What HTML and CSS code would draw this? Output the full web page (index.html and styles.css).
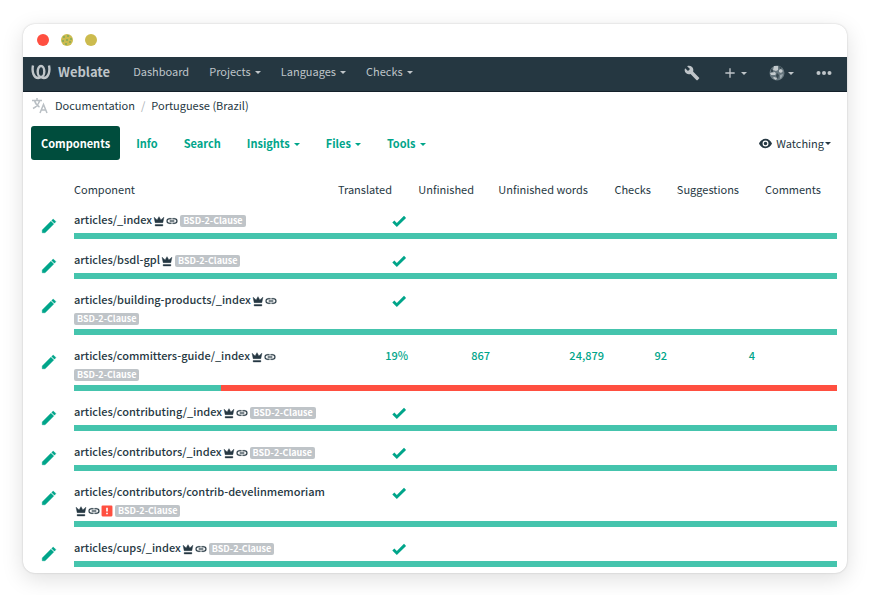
FILE: index.html
```html
<!DOCTYPE html>
<html lang="en">
<head>
<meta charset="utf-8">
<title>Weblate</title>
<link rel="stylesheet" href="styles.css">
</head>
<body>
<svg class="sprite" aria-hidden="true">
  <symbol id="pencil" viewBox="0 0 24 24"><path d="M20.710 7.040c.4-.39.4-1.040 0-1.410l-2.340-2.340c-.37-.39-1.020-.39-1.410 0l-1.340 1.330 3.750 3.750M3 17.250V21h3.750L18.310 9.430l-3.750-3.750L3 17.250Z" stroke="currentColor" stroke-width=".6" stroke-linejoin="round"/></symbol>
  <symbol id="check" viewBox="1 1 22 22"><path d="M9 20.420 2.790 14.210 5.620 11.380 9 14.770 18.880 4.880 21.710 7.710 9 20.420Z"/></symbol>
  <symbol id="crown" viewBox="1 1 22 22"><path d="M5 15 3 5l5.500 5L12 4l3.500 6L21 5l-2 10H5m14 3.500V21H5v-2.500h14Z" stroke="currentColor" stroke-width=".8"/></symbol>
  <symbol id="link" viewBox="1 1 22 22"><path d="M3.900 12c0-1.710 1.390-3.100 3.100-3.100h4V7H7a5 5 0 0 0 0 10h4v-1.900H7c-1.710 0-3.100-1.390-3.100-3.100M8 13h8v-2H8v2m9-6h-4v1.900h4a3.100 3.100 0 0 1 0 6.200h-4V17h4a5 5 0 0 0 0-10Z" stroke="currentColor" stroke-width=".4"/></symbol>
  <symbol id="alert" viewBox="1 1 22 22"><rect x="2" y="2" width="20" height="20" rx="2"/><path fill="#fff" d="M10.500 6h3v7h-3zM10.500 15h3v3h-3z"/></symbol>
</svg>
<div class="window">
  <div class="titlebar">
    <svg width="62" height="14" viewBox="0 0 62 14" aria-hidden="true">
      <circle cx="7" cy="7" r="6" fill="#ff4f40"/><circle cx="31" cy="7" r="6" fill="#ccbb4e"/><circle cx="55" cy="7" r="6" fill="#ccbb4e"/>
      <g fill="#2f9a68"><circle cx="28" cy="4" r=".7"/><circle cx="32" cy="3" r=".7"/><circle cx="35" cy="6" r=".7"/><circle cx="31" cy="7" r=".7"/><circle cx="27" cy="8" r=".7"/><circle cx="34" cy="9" r=".7"/><circle cx="30" cy="11" r=".7"/></g>
    </svg>
  </div>
  <header class="navbar">
    <a class="brand" href="#"><svg width="20" height="16" viewBox="0 0 20 16" fill="none" stroke="currentColor" stroke-width="2.400" aria-hidden="true"><ellipse cx="10" cy="7.500" rx="3.300" ry="5.500"/><path d="M2 1.500C.6 8 3 14 7.200 14c1.300 0 2.200-.5 2.800-1.200M18 1.500C19.400 8 17 14 12.800 14c-1.300 0-2.200-.5-2.800-1.200"/></svg>Weblate</a>
    <nav class="menu">
      <a href="#">Dashboard</a>
      <a class="caret" href="#">Projects</a>
      <a class="caret" href="#">Languages</a>
      <a class="caret" href="#">Checks</a>
    </nav>
    <div class="tools">
      <a href="#" aria-label="Manage"><svg width="16" height="16" viewBox="0 0 24 24" aria-hidden="true"><path d="m22.700 19-9.100-9.100c.9-2.300.4-5-1.500-6.900-2-2-5-2.400-7.400-1.300L9 6 6 9 1.600 4.700C.4 7.100.9 10.100 2.900 12.100c1.900 1.900 4.600 2.400 6.900 1.500l9.100 9.100c.4.4 1 .4 1.400 0l2.300-2.300c.5-.4.5-1.100.1-1.400Z"/></svg></a>
      <a class="caret" href="#" aria-label="Add"><svg width="16" height="16" viewBox="0 0 24 24" aria-hidden="true"><path d="M19 13h-6v6h-2v-6H5v-2h6V5h2v6h6v2Z"/></svg></a>
      <a class="caret" href="#" aria-label="Profile"><svg width="16" height="16" viewBox="0 0 16 16" aria-hidden="true"><circle cx="8" cy="8" r="7.500" fill="#66767e"/><path fill="#c3cacd" d="M5 1l4 0 0 4-2 1-3-1zM10 5l2-1 2 2-2 2-2-1zM1 8l5-1 1 2-1 1-4 0zM5 12l3 1-1 2-3-2z"/><path fill="#36464f" d="M2 4l2 1 0 2-2 0zM8 8l2 2-1 4-2-3zM10 1l3 2-2 1z"/><path fill="#9ba8ae" d="M11 10l3-1-1 3-2 2z"/></svg></a>
      <a href="#" aria-label="More"><svg width="16" height="16" viewBox="0 0 16 16" aria-hidden="true"><circle cx="2.500" cy="8" r="2"/><circle cx="8" cy="8" r="2"/><circle cx="13.500" cy="8" r="2"/></svg></a>
    </div>
  </header>
  <nav class="breadcrumb" aria-label="Breadcrumb">
    <svg width="18" height="18" viewBox="0 0 18 18" fill="none" stroke="#b9bfc4" stroke-width="1.500" aria-hidden="true"><path d="M1 4.500h10M6 2v2.500M3.500 4.500c1 3.500 3 5.500 5 6.500M8.700 4.500C7.500 8.500 5 11 2 12.500M9 17l3.500-8.500L16 17M10 14h5"/></svg>
    <a href="#">Documentation</a><span class="sep">/</span><a href="#">Portuguese (Brazil)</a>
  </nav>
  <div class="tabs">
    <a class="tab active" href="#">Components</a>
    <a class="tab" href="#">Info</a>
    <a class="tab" href="#">Search</a>
    <a class="tab caret" href="#">Insights</a>
    <a class="tab caret" href="#">Files</a>
    <a class="tab caret" href="#">Tools</a>
    <button class="watch caret" type="button"><svg width="13" height="13" viewBox="1 1 22 22" aria-hidden="true"><path d="M12 9a3 3 0 1 0 0 6 3 3 0 0 0 0-6m0 8a5 5 0 1 1 0-10 5 5 0 0 1 0 10m0-13C7 4 2.700 7.600 1 12c1.700 4.400 6 8 11 8s9.300-3.600 11-8c-1.700-4.400-6-8-11-8Z"/></svg>Watching</button>
  </div>
  <table class="list">
    <colgroup><col class="c-edit"><col><col class="c-mid"><col class="c-mid"><col class="c-wide"><col class="c-small"><col class="c-large"><col class="c-mid"></colgroup>
    <thead>
      <tr><td></td><th scope="col">Component</th><th scope="col">Translated</th><th scope="col">Unfinished</th><th scope="col">Unfinished words</th><th scope="col">Checks</th><th scope="col">Suggestions</th><th scope="col">Comments</th></tr>
    </thead>
    <tbody id="rows"></tbody>
  </table>
</div>
<script src="rows.js"></script>
</body>
</html>
```
FILE: styles.css
```css
* { box-sizing: border-box; }
body {
  margin: 0;
  padding: 24px 23px 22px;
  background: #fff;
  color: #263843;
  font: 400 11px/18px "Noto Sans CJK SC", "Open Sans", sans-serif;
}
a { color: inherit; text-decoration: none; }
svg { fill: currentColor; flex: none; }
svg[fill="none"] { fill: none; }
.sprite { position: absolute; width: 0; height: 0; }
.window {
  border-radius: 12px;
  overflow: hidden;
  box-shadow: 0 0 2px rgba(0, 0, 0, .2), 0 6px 22px rgba(0, 0, 0, .13);
}
.titlebar { display: flex; align-items: center; height: 33px; padding: 0 13px 1px; }
.navbar {
  display: flex;
  align-items: center;
  height: 35px;
  padding: 0 15px 4px 8px;
  background: #253741;
  border-bottom: 1px solid #14202a;
  color: #bfc5c9;
}
.brand { display: flex; align-items: center; gap: 7px; font-size: 13px; font-weight: 700; }
.menu { display: flex; gap: 20px; margin-left: 23px; padding-bottom: 2px; }
.tools { display: flex; align-items: center; gap: 22px; margin-left: auto; padding-top: 2px; }
.tools a { display: flex; align-items: center; }
.caret::after {
  content: "";
  display: inline-block;
  margin-left: 4px;
  vertical-align: 2px;
  border: 3px solid transparent;
  border-top-color: currentColor;
  border-bottom: 0;
}
.tools .caret::after { margin-left: 3px; }
.breadcrumb { display: flex; align-items: center; padding: 4px 8px 1px; }
.breadcrumb svg { margin-right: 6px; }
.sep { margin: 0 6px; color: #a9b0b5; }
.tabs { display: flex; align-items: center; gap: 6px; margin-top: 11px; padding: 0 16px 0 8px; }
.tab { padding: 8px 10px; color: #00a58a; font-weight: 700; }
.tab.active { background: #004d3d; border-radius: 3px; color: #fff; }
.watch {
  display: flex;
  align-items: center;
  margin-left: auto;
  padding: 0;
  border: 0;
  background: none;
  color: inherit;
  font: inherit;
}
.watch svg { margin-right: 4px; }
.watch::after { margin-left: 1px; }
.list { width: calc(100% - 10px); margin-top: 20px; border-collapse: collapse; table-layout: fixed; }
.c-edit { width: 51px; }
.c-small { width: 63px; }
.c-mid { width: 82px; }
.c-large { width: 88px; }
.c-wide { width: 114px; }
.list th { padding: 0 16px 12px 0; font-weight: 400; text-align: right; white-space: nowrap; }
.list th:nth-child(2) { padding-left: 0; text-align: left; }
.list td { padding: 0; vertical-align: top; }
.list .edit { padding: 7px 0 0 17px; line-height: 0; }
.edit, .num { color: #00a58a; }
.info td { height: 23px; }
.list .name { padding-bottom: 3px; }
.name a { font-weight: 500; white-space: nowrap; }
.name svg { margin-left: 1px; vertical-align: -3px; }
.name .err { color: #ff4f40; }
.num { font-weight: 500; text-align: right; }
.num svg { display: block; margin: 3px 1px 0 auto; }
.badge {
  display: inline-block;
  margin-left: 2px;
  padding: 0 3px;
  border-radius: 2px;
  background: #bfc4c8;
  color: #fff;
  font-size: 9px;
  font-weight: 700;
  line-height: 12px;
}
.wrapped { margin-left: 0; }
.bar { display: flex; height: 6px; margin-bottom: 11px; background: #ff4f40; }
tr:last-child .bar { margin-bottom: 6px; }
.bar i { background: #45c4ad; }
```
FILE: rows.js
```js
const components = [
  { name: "articles/_index", icons: ["crown", "link"] },
  { name: "articles/bsdl-gpl", icons: ["crown"] },
  { name: "articles/building-products/_index", icons: ["crown", "link"], wrap: true },
  { name: "articles/committers-guide/_index", icons: ["crown", "link"], wrap: true, done: 19.3, stats: ["19%", "867", "24,879", "92", "4", ""] },
  { name: "articles/contributing/_index", icons: ["crown", "link"] },
  { name: "articles/contributors/_index", icons: ["crown", "link"] },
  { name: "articles/contributors/contrib-develinmemoriam", icons: ["crown", "link", "alert"] },
  { name: "articles/cups/_index", icons: ["crown", "link"] }
];
const icon = (id, size, cls = "") =>
  `<svg class="${cls}" width="${size}" height="${size}" aria-hidden="true"><use href="#${id}"/></svg>`;

document.getElementById("rows").innerHTML = components.map(c => {
  const stats = c.stats || [icon("check", 16), "", "", "", "", ""];
  const icons = c.icons.map(i => icon(i, 12, i === "alert" ? "err" : "")).join("");
  const badge = `<span class="badge${c.wrap ? " wrapped" : ""}">BSD-2-Clause</span>`;
  return `<tr class="info">
    <td class="edit" rowspan="2"><a href="#" aria-label="Translate">${icon("pencil", 18)}</a></td>
    <td class="name"><a href="#">${c.name}</a><wbr>${icons}${badge}</td>
    ${stats.map(s => `<td class="num">${s}</td>`).join("")}
  </tr>
  <tr><td colspan="7"><div class="bar"><i style="width:${c.done || 100}%"></i></div></td></tr>`;
}).join("");
```
